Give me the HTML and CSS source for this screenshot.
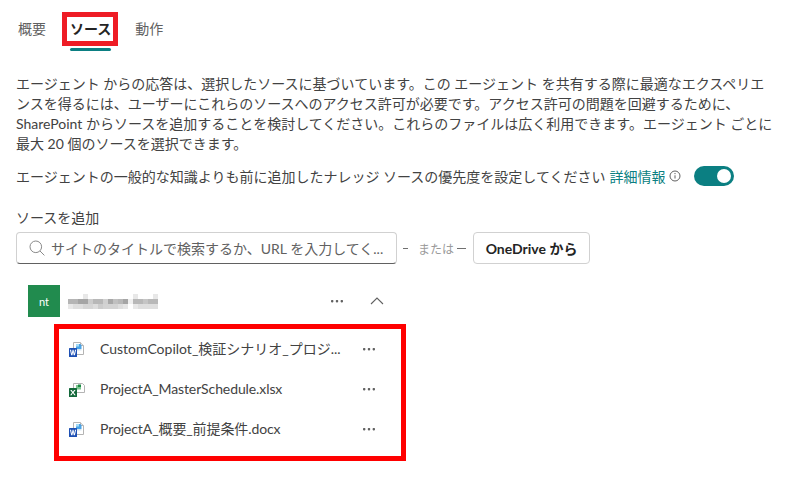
FILE: index.html
```html
<!DOCTYPE html>
<html lang="ja">
<head>
<meta charset="utf-8">
<title>ソース</title>
<link rel="stylesheet" href="styles.css">
</head>
<body>
<svg class="defs" width="0" height="0" aria-hidden="true">
  <symbol id="word" viewBox="0 0 16 16">
    <path d="M4.5 1.5h7l3 3v9h-10z" fill="#fff" stroke="#b4b4b4"/>
    <path d="M11.5 1.5v3h3" fill="#e4e4e4" stroke="#b4b4b4"/>
    <path d="M7 3h4.5l1 1.5V8H7z" fill="#4aa3e6"/>
    <path d="M7 3h3v2.5H7z" fill="#a6dcf7"/>
    <path d="M8 8h4.5v1.5H8z" fill="#d5e6f3"/>
    <rect x="0" y="7" width="8" height="9" rx=".6" fill="#1c4fb3"/>
    <path d="M.9 8.8h1.2l.7 3.6.8-3.6h.9l.8 3.6.7-3.6h1.1l-1.2 5.4h-1.2l-.6-3.2-.7 3.2H2.2z" fill="#fff"/>
  </symbol>
  <symbol id="excel" viewBox="0 0 16 16">
    <path d="M4.5 2.5h9l2 2v7h-11z" fill="#fff" stroke="#b4b4b4"/>
    <path d="M7 4h4.5v2H12v2.5H7z" fill="#7cc68f"/>
    <path d="M9 3.5h3V6H9z" fill="#1f8a45"/>
    <rect x="0" y="7" width="8" height="9" rx=".6" fill="#12683a"/>
    <path d="M1.2 8.9h1.5l1.2 1.9 1.2-1.9h1.5l-1.9 2.6 2 2.7H5.2L3.9 12.1 2.6 14.2H1.1l2-2.7z" fill="#fff"/>
  </symbol>
  <symbol id="dots" viewBox="0 0 14 4">
    <rect x="1" y="1" width="2.4" height="2.4" rx=".8"/><rect x="5.8" y="1" width="2.4" height="2.4" rx=".8"/><rect x="10.6" y="1" width="2.4" height="2.4" rx=".8"/>
  </symbol>
</svg>

<main class="page">
  <nav class="tabs">
    <span class="tab">概要</span>
    <span class="tab tab-active">ソース<span class="mark tab-mark"></span></span>
    <span class="tab">動作</span>
  </nav>

  <p class="intro">エージェント からの応答は、選択したソースに基づいています。この エージェント を共有する際に最適なエクスペリエ<br>ンスを得るには、ユーザーにこれらのソースへのアクセス許可が必要です。アクセス許可の問題を回避するために、<br>SharePoint からソースを追加することを検討してください。これらのファイルは広く利用できます。エージェント ごとに<br>最大 20 個のソースを選択できます。</p>

  <div class="priority">
    <span>エージェントの一般的な知識よりも前に追加したナレッジ ソースの優先度を設定してください</span>
    <a class="more">詳細情報</a>
    <svg class="info" viewBox="0 0 12 12" width="12" height="12"><circle cx="6" cy="6" r="5" fill="none" stroke="#616161"/><path d="M6 5.3v3.2" stroke="#616161"/><circle cx="6" cy="3.6" r=".7" fill="#616161"/></svg>
    <span class="toggle"><span class="knob"></span></span>
  </div>

  <div class="add-label">ソースを追加</div>
  <div class="add-row">
    <div class="search">
      <svg class="search-icon" viewBox="0 0 16 16" width="16" height="16"><circle cx="6.8" cy="6.8" r="5.8" fill="none" stroke="#8a8a8a"/><path d="M11 11l4.4 4.4" stroke="#8a8a8a"/></svg>
      <span class="placeholder">サイトのタイトルで検索するか、URL を入力してく...</span>
    </div>
    <span class="or">または</span>
    <button class="btn">OneDrive から</button>
  </div>

  <section class="group">
    <div class="site">
      <span class="avatar">nt</span>
      <svg class="mosaic" viewBox="0 0 18 3" width="90" height="15" shape-rendering="crispEdges" role="img" aria-label="サイト名（モザイク処理済み）">
        <rect x="3" y="0" width="1" height="1" fill="#e8e8e8"/><rect x="13" y="0" width="1" height="1" fill="#e8e8e8"/><rect x="17" y="0" width="1" height="1" fill="#e8e8e8"/>
        <rect x="0" y="1" width="2" height="1" fill="#b5b5b5"/><rect x="2" y="1" width="2" height="1" fill="#a5a5a5"/><rect x="4" y="1" width="1" height="1" fill="#ccc"/><rect x="5" y="1" width="2" height="1" fill="#b8b8b8"/><rect x="7" y="1" width="1" height="1" fill="#d0d0d0"/><rect x="8" y="1" width="1" height="1" fill="#a8a8a8"/><rect x="9" y="1" width="1" height="1" fill="#c0c0c0"/><rect x="10" y="1" width="1" height="1" fill="#b8b8b8"/><rect x="11" y="1" width="1" height="1" fill="#a5a5a5"/><rect x="12" y="1" width="1" height="1" fill="#f0f0f0"/><rect x="13" y="1" width="2" height="1" fill="#b8b8b8"/><rect x="15" y="1" width="1" height="1" fill="#c5c5c5"/><rect x="16" y="1" width="2" height="1" fill="#b8b8b8"/>
        <rect x="0" y="2" width="1" height="1" fill="#e8e8e8"/><rect x="1" y="2" width="2" height="1" fill="#dedede"/><rect x="3" y="2" width="2" height="1" fill="#d5d5d5"/><rect x="5" y="2" width="1" height="1" fill="#ddd"/><rect x="6" y="2" width="1" height="1" fill="#ccc"/><rect x="7" y="2" width="3" height="1" fill="#d3d3d3"/><rect x="10" y="2" width="1" height="1" fill="#ddd"/><rect x="11" y="2" width="1" height="1" fill="#e5e5e5"/><rect x="13" y="2" width="1" height="1" fill="#e8e8e8"/><rect x="14" y="2" width="4" height="1" fill="#dedede"/>
      </svg>
      <svg class="dots dots-site"><use href="#dots"/></svg>
      <svg class="chevron" viewBox="0 0 14 8" width="14" height="8"><path d="M1 7l6-6 6 6" fill="none" stroke="#616161" stroke-width="1.1"/></svg>
    </div>
    <ul class="files">
      <li class="file"><svg class="file-icon"><use href="#word"/></svg><span class="file-name file-name-clipped">CustomCopilot_検証シナリオ_プロジ...</span><svg class="dots"><use href="#dots"/></svg></li>
      <li class="file"><svg class="file-icon"><use href="#excel"/></svg><span class="file-name">ProjectA_MasterSchedule.xlsx</span><svg class="dots"><use href="#dots"/></svg></li>
      <li class="file"><svg class="file-icon"><use href="#word"/></svg><span class="file-name">ProjectA_概要_前提条件.docx</span><svg class="dots"><use href="#dots"/></svg></li>
    </ul>
    <div class="mark files-mark"></div>
  </section>
</main>
</body>
</html>
```
FILE: styles.css
```css
* { box-sizing: border-box; }
html, body { margin: 0; padding: 0; }
body {
  width: 798px;
  height: 501px;
  overflow: hidden;
  background: #fff;
  color: #424242;
  font-family: Lato, "Noto Sans CJK JP", sans-serif;
  font-size: 14px;
}
.defs { position: absolute; }
.page { padding: 0 16px; }

.tabs { display: flex; height: 51px; padding-top: 19px; gap: 24px; margin-left: 2px; line-height: 20px; }
.tab { position: relative; color: #616161; }
.tab-active { color: #242424; font-weight: 700; }
.tab-active::after {
  content: "";
  position: absolute;
  left: 0; right: 0; top: 29px;
  height: 3px;
  border-radius: 2px;
  background: #0b7f82;
}
.mark { position: absolute; pointer-events: none; }
.tab-mark { left: -8px; right: -7px; top: -7px; height: 34px; border: 5px solid #ee1c25; }

.intro { margin: 23px 0 0; line-height: 20px; white-space: nowrap; color: #424242; }

.priority { display: flex; align-items: center; height: 24px; margin-top: 10px; white-space: nowrap; }
.more { color: #0b7f82; margin-left: 4px; }
.info { margin-left: 4px; }
.toggle {
  position: relative;
  width: 40px; height: 20px;
  margin-left: 13px;
  border-radius: 10px;
  background: #0b7f82;
}
.knob {
  position: absolute;
  right: 3px; top: 3px;
  width: 14px; height: 14px;
  border-radius: 50%;
  background: #fff;
}

.add-label { margin-top: 20px; line-height: 20px; }
.add-row { display: flex; align-items: center; margin-top: 4px; height: 32px; }
.search {
  display: flex; align-items: center;
  width: 381px; height: 32px;
  padding-left: 12px;
  border: 1px solid #d1d1d1;
  border-bottom-color: #616161;
  border-radius: 4px;
  gap: 6px;
}
.placeholder { color: #616161; white-space: nowrap; }
.or {
  display: flex; align-items: center;
  margin-left: 6px;
  font-size: 12px;
  color: #9a9a9a;
  white-space: nowrap;
}
.or::before, .or::after { content: ""; height: 1px; background: #707070; }
.or::before { width: 5px; margin-right: 10px; }
.or::after { width: 9px; margin-left: 3px; }
.btn {
  margin-left: 7px;
  width: 117px; height: 32px;
  padding: 0;
  background: #fff;
  border: 1px solid #d1d1d1;
  border-radius: 4px;
  color: #242424;
  font: 700 14px Lato, "Noto Sans CJK JP", sans-serif;
}

.group { position: relative; margin-left: 12px; margin-top: 21px; }
.site { display: flex; align-items: center; height: 32px; }
.avatar {
  display: flex; align-items: center; justify-content: center;
  width: 32px; height: 32px;
  background: #218b4e;
  color: #fff;
  font-size: 11px;
}
.mosaic { display: block; margin-left: 8px; }
.dots { display: block; width: 14px; height: 4px; fill: #616161; }
.dots-site { margin-left: 172px; }
.chevron { margin-left: 26px; }

.files { list-style: none; margin: 12px 0 0; padding: 0; }
.file { display: flex; align-items: center; height: 40px; padding-left: 41px; }
.file-icon { width: 16px; height: 16px; }
.file-name { margin-left: 15px; width: 262px; white-space: nowrap; position: relative; top: -1px; letter-spacing: -.1px; }
.file-name-clipped { letter-spacing: 0; }
.files-mark { left: 26px; top: 39px; width: 352px; height: 137px; border: 5px solid #f00; }
```
